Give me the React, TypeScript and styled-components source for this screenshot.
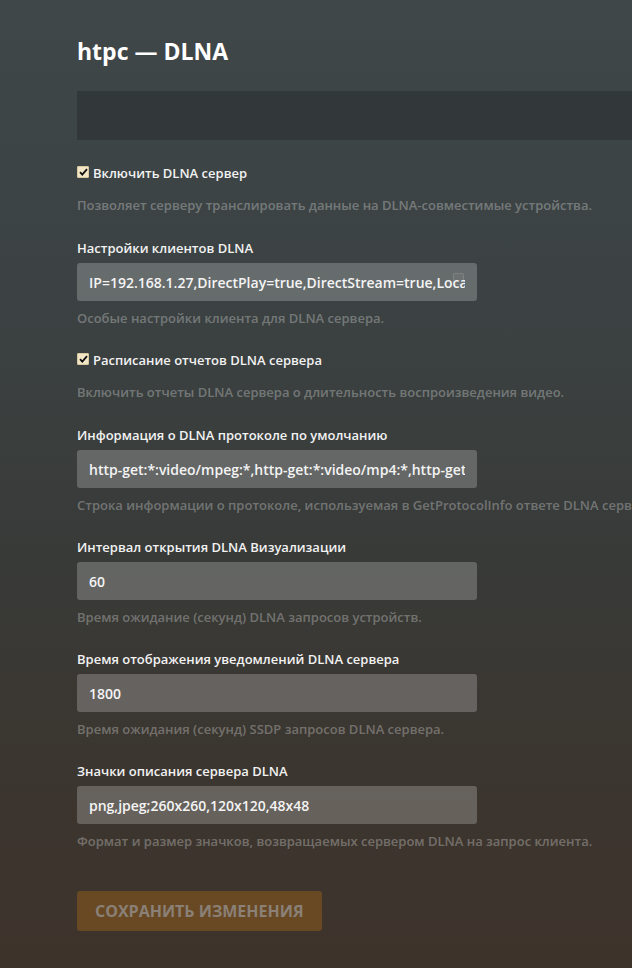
import { FC } from 'react';
import styled, { createGlobalStyle } from 'styled-components';

const GlobalStyle = createGlobalStyle`
	html, body {
		margin: 0;
		padding: 0;
		height: 100%;
		overflow: hidden;
	}
	body {
		font-family: 'Open Sans', 'Noto Sans', sans-serif;
		background: linear-gradient(180deg, #3f4749 0%, #3c4243 30%, #383b39 55%, #3b3630 78%, #3e332b 100%);
		color: #eee;
	}
`;

const StyledPage = styled.div`
	width: 760px;
	padding: 36px 0 0 77px;
	box-sizing: border-box;
	min-height: 968px;
`;

const StyledTitle = styled.h1`
	margin: 0 0 25px;
	font-size: 23px;
	line-height: 30px;
	font-weight: 700;
	color: #fff;
`;

const StyledBar = styled.div`
	height: 49px;
	background-color: rgba(0, 0, 0, 0.18);
	margin-bottom: 24px;
`;

const StyledGroup = styled.div<{ spacing: number }>`
	margin-bottom: ${({ spacing }) => spacing}px;
	position: relative;
`;

const StyledLabel = styled.label`
	display: flex;
	align-items: center;
	gap: 4px;
	font-size: 13px;
	line-height: 18px;
	font-weight: 600;
	color: #f2f2f2;
	margin: 0;
`;

const StyledCheckbox = styled.span`
	display: inline-flex;
	align-items: center;
	justify-content: center;
	width: 12px;
	height: 12px;
	border-radius: 2px;
	background-color: #f1e6c6;
	box-shadow: inset 0 0 0 1px #d8c9a0;
	margin-top: -2px;
`;

const StyledInputBox = styled.div`
	position: relative;
	width: 400px;
	margin-top: 6px;
`;

const StyledInput = styled.input`
	display: block;
	width: 100%;
	height: 38px;
	box-sizing: border-box;
	padding: 0 12px;
	border: 0;
	border-radius: 3px;
	background-color: rgba(255, 255, 255, 0.22);
	color: #f4f4f4;
	font-family: 'Open Sans', 'Noto Sans', sans-serif;
	font-size: 14px;
	font-weight: 600;
	outline: none;
`;

const StyledFillIcon = styled.span`
	position: absolute;
	top: 10px;
	right: 13px;
	width: 9px;
	height: 10px;
	border-radius: 2px;
	border: 1px solid rgba(255, 255, 255, 0.12);
	background-color: rgba(255, 255, 255, 0.04);
`;

const StyledHelp = styled.p<{ gap: number }>`
	margin: ${({ gap }) => gap}px 0 0;
	font-size: 13px;
	line-height: 18px;
	font-weight: 600;
	color: rgba(255, 255, 255, 0.3);
	white-space: nowrap;
`;

const StyledButton = styled.button`
	display: flex;
	align-items: center;
	height: 40px;
	margin-top: 41px;
	padding: 0 18px;
	border: 0;
	border-radius: 3px;
	background-color: #684924;
	color: #8a8076;
	font-family: 'Open Sans', 'Noto Sans', sans-serif;
	font-size: 16px;
	font-weight: 700;
	text-transform: uppercase;
	cursor: default;
`;

type Field =
	| { kind: 'check'; label: string; help: string }
	| { kind: 'text'; label: string; value: string; help: string; fillIcon?: boolean };

const fields: Field[] = [
	{
		kind: 'check',
		label: 'Включить DLNA сервер',
		help: 'Позволяет серверу транслировать данные на DLNA-совместимые устройства.',
	},
	{
		kind: 'text',
		label: 'Настройки клиентов DLNA',
		value: 'IP=192.168.1.27,DirectPlay=true,DirectStream=true,LocalResolution=1280x720',
		help: 'Особые настройки клиента для DLNA сервера.',
		fillIcon: true,
	},
	{
		kind: 'check',
		label: 'Расписание отчетов DLNA сервера',
		help: 'Включить отчеты DLNA сервера о длительность воспроизведения видео.',
	},
	{
		kind: 'text',
		label: 'Информация о DLNA протоколе по умолчанию',
		value: 'http-get:*:video/mpeg:*,http-get:*:video/mp4:*,http-get:*:video/vnd.dlna.mpeg-tts:*',
		help: 'Строка информации о протоколе, используемая в GetProtocolInfo ответе DLNA сервера.',
	},
	{
		kind: 'text',
		label: 'Интервал открытия DLNA Визуализации',
		value: '60',
		help: 'Время ожидание (секунд) DLNA запросов устройств.',
	},
	{
		kind: 'text',
		label: 'Время отображения уведомлений DLNA сервера',
		value: '1800',
		help: 'Время ожидания (секунд) SSDP запросов DLNA сервера.',
	},
	{
		kind: 'text',
		label: 'Значки описания сервера DLNA',
		value: 'png,jpeg;260x260,120x120,48x48',
		help: 'Формат и размер значков, возвращаемых сервером DLNA на запрос клиента.',
	},
];

const CheckMark: FC = () => (
	<svg width="9" height="8" viewBox="0 0 9 8">
		<path d="M1 4.2 L3.3 6.6 L8 1.2" fill="none" stroke="#111" strokeWidth="1.8" />
	</svg>
);

export default function App() {
	return (
		<>
			<GlobalStyle />
			<StyledPage>
				<StyledTitle>htpc — DLNA</StyledTitle>
				<StyledBar />

				{fields.map((field) =>
					field.kind === 'check' ? (
						<StyledGroup key={field.label} spacing={25}>
							<StyledLabel>
								<StyledCheckbox>
									<CheckMark />
								</StyledCheckbox>
								{field.label}
							</StyledLabel>
							<StyledHelp gap={14}>{field.help}</StyledHelp>
						</StyledGroup>
					) : (
						<StyledGroup key={field.label} spacing={24}>
							<StyledLabel>{field.label}</StyledLabel>
							<StyledInputBox>
								<StyledInput defaultValue={field.value} readOnly />
								{field.fillIcon && <StyledFillIcon />}
							</StyledInputBox>
							<StyledHelp gap={8}>{field.help}</StyledHelp>
						</StyledGroup>
					),
				)}

				<StyledButton disabled>Сохранить изменения</StyledButton>
			</StyledPage>
		</>
	);
}
